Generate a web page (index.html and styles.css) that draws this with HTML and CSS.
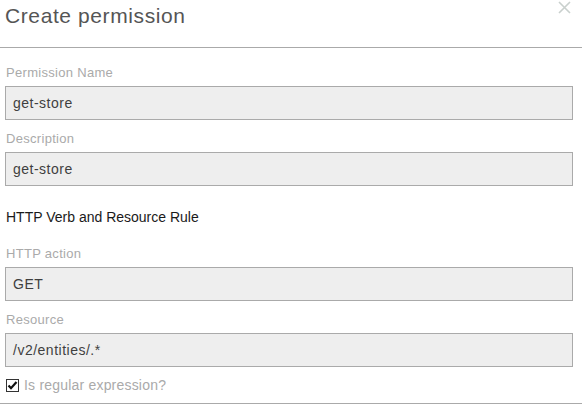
FILE: index.html
```html
<!DOCTYPE html>
<html>
<head>
<meta charset="utf-8">
<link rel="stylesheet" href="styles.css">
</head>
<body>
<div class="modal">
  <div class="modal-header">
    <h1 class="title">Create permission</h1>
    <button class="close" aria-label="Close">
      <svg width="13" height="13" viewBox="0 0 13 13"><path d="M1 1 L12 12 M12 1 L1 12" stroke="#c9d0cd" stroke-width="1.6" fill="none"/></svg>
    </button>
  </div>
  <div class="modal-body">
    <div class="group">
      <label class="label">Permission Name</label>
      <div class="input">get-store</div>
    </div>
    <div class="group">
      <label class="label">Description</label>
      <div class="input">get-store</div>
    </div>
    <h2 class="section">HTTP Verb and Resource Rule</h2>
    <div class="group">
      <label class="label">HTTP action</label>
      <div class="input">GET</div>
    </div>
    <div class="group">
      <label class="label">Resource</label>
      <div class="input">/v2/entities/.*</div>
    </div>
    <div class="check-row">
      <span class="checkbox">
        <svg width="13" height="13" viewBox="0 0 13 13"><rect x="0.5" y="0.5" width="12" height="12" fill="#fff" stroke="#333"/><path d="M2.5 6.5 L5 9.2 L10.5 3" stroke="#111" stroke-width="2.2" fill="none"/></svg>
      </span>
      <span class="check-label">Is regular expression?</span>
    </div>
  </div>
  <div class="modal-footer"></div>
</div>
</body>
</html>
```

FILE: styles.css
```css
html, body {
  margin: 0;
  padding: 0;
  background: #fff;
}
body {
  font-family: "Liberation Sans", Arial, sans-serif;
  width: 582px;
  height: 413px;
  overflow: hidden;
}
.modal {
  position: relative;
}
.modal-header {
  height: 47px;
  border-bottom: 1px solid #aaa;
  box-sizing: content-box;
  padding: 0 5px;
}
.title {
  margin: 0;
  font-weight: normal;
  font-size: 21px;
  letter-spacing: 0.6px;
  color: #555;
  line-height: 32px;
  padding-top: 0;
}
.close {
  position: absolute;
  top: 1px;
  right: 11px;
  border: 0;
  background: none;
  padding: 0;
  width: 13px;
  height: 13px;
  display: block;
}
.close svg { display: block; }
.modal-body {
  padding: 16px 9px 10px 5px;
}
.group {
  display: flex;
  flex-direction: column;
  gap: 4px;
  margin-bottom: 10px;
}
.label {
  font-size: 13px;
  letter-spacing: 0.3px;
  line-height: 18px;
  color: #aaa;
  padding-left: 1px;
}
.input {
  height: 34px;
  box-sizing: border-box;
  border: 1px solid #aaa;
  background: #eee;
  color: #3f3f3f;
  font-size: 14px;
  letter-spacing: 0.5px;
  line-height: 32px;
  padding-left: 7px;
}
.section {
  margin: 21px 0 18px;
  font-weight: normal;
  font-size: 14px;
  line-height: 20px;
  color: #1a1a1a;
  padding-left: 1px;
}
.check-row {
  display: flex;
  align-items: center;
  gap: 5px;
  height: 16px;
  padding-left: 1px;
}
.checkbox {
  display: block;
  width: 13px;
  height: 13px;
}
.checkbox svg { display: block; }
.check-label {
  font-size: 14px;
  letter-spacing: 0.2px;
  color: #aaa;
}
.modal-footer {
  border-top: 1px solid #aaa;
}
```
